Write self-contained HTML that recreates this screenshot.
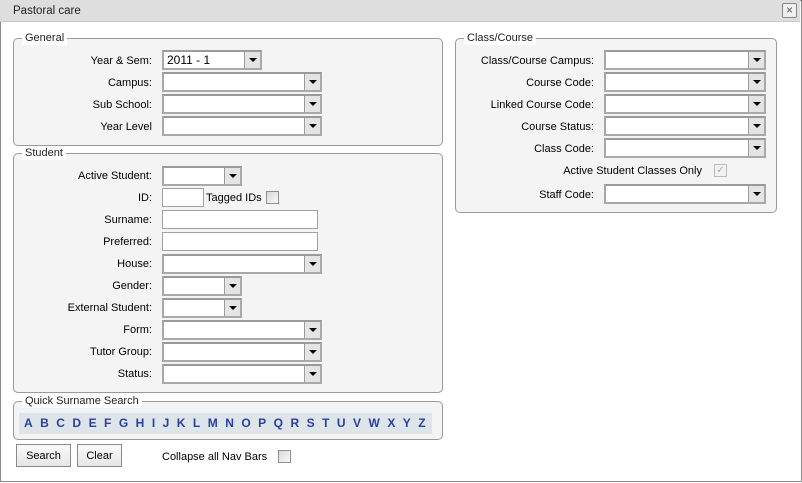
<!DOCTYPE html>
<html><head><meta charset="utf-8"><style>
*{box-sizing:border-box;margin:0;padding:0}
body{width:802px;height:483px;background:#fff;font-family:"Liberation Sans",sans-serif;font-size:11px;color:#000;position:relative;overflow:hidden}
.win{position:absolute;left:0;top:0;width:802px;height:482px;border:1px solid #8a8a8a;background:#fff}
.title{position:absolute;left:0;top:0;width:800px;height:22px;background:#dedede;border-bottom:1px solid #c8c8c8}
.title span{position:absolute;left:13px;top:5px;font-size:11.5px;color:#222}
.close{position:absolute;left:782px;top:3px;width:15px;height:15px;border:1px solid #888;border-radius:2px;background:#f0f0f0;font-size:12px;line-height:12px;text-align:center;color:#555}
.fs{position:absolute;border:1px solid #9a9a9a;border-radius:5px;background:#f4f4f4}
.lg{position:absolute;background:#fff;padding:0 3px;font-size:11px;color:#222;top:-8px;left:8px;line-height:14px}
.lb{position:absolute;text-align:right;white-space:nowrap;font-size:11px;line-height:14px;margin-top:1px}
.sel{position:absolute;height:20px;border:2px solid #a9a9a9;border-top-color:#9a9a9a;background:#fff;font-size:12px;line-height:16px;padding-left:3px}
.sel i{position:absolute;right:0;top:0;width:16px;height:16px;background:#e4e4e4;border-left:1px solid #999}
.sel i:after{content:"";position:absolute;left:4px;top:6px;border-left:4px solid transparent;border-right:4px solid transparent;border-top:4px solid #000}
.inp{position:absolute;height:19px;border:1px solid #a0a0a0;background:#fff}
.cb{position:absolute;width:13px;height:13px;border:1px solid #8f8f8f;background:linear-gradient(135deg,#d8d8d8,#fafafa)}
.letters{position:absolute;left:19px;top:413px;width:413px;height:21px;background:#dde5ea;font-weight:bold;color:#2b3f9e;font-size:12px;line-height:21px;padding:0 6px 0 5px;display:flex;justify-content:space-between}
.btn{position:absolute;height:23px;border:1px solid #8a8a8a;background:linear-gradient(#fafafa,#e6e6e6);font-size:11px;line-height:22px;text-align:center}
</style></head><body>
<div class="win"></div>
<div class="title"><span>Pastoral care</span></div>
<div class="close">×</div>

<div class="fs" style="left:13px;top:38px;width:430px;height:108px"><div class="lg">General</div></div>
<div class="fs" style="left:13px;top:153px;width:430px;height:240px"><div class="lg">Student</div></div>
<div class="fs" style="left:13px;top:401px;width:430px;height:39px"><div class="lg">Quick Surname Search</div></div>
<div class="fs" style="left:455px;top:38px;width:322px;height:175px"><div class="lg">Class/Course</div></div>

<div class="lb" style="right:650px;top:53px">Year &amp; Sem:</div><div class="sel" style="left:162px;top:50px;width:100px">2011 - 1<i></i></div>
<div class="lb" style="right:650px;top:75px">Campus:</div><div class="sel" style="left:162px;top:72px;width:160px"><i></i></div>
<div class="lb" style="right:650px;top:97px">Sub School:</div><div class="sel" style="left:162px;top:94px;width:160px"><i></i></div>
<div class="lb" style="right:650px;top:119px">Year Level</div><div class="sel" style="left:162px;top:116px;width:160px"><i></i></div>

<div class="lb" style="right:650px;top:168px">Active Student:</div><div class="sel" style="left:162px;top:166px;width:80px"><i></i></div>
<div class="lb" style="right:650px;top:190px">ID:</div><div class="inp" style="left:162px;top:188px;width:42px"></div>
<div class="lb" style="left:206px;top:190px">Tagged IDs</div><div class="cb" style="left:266px;top:191px"></div>
<div class="lb" style="right:650px;top:212px">Surname:</div><div class="inp" style="left:162px;top:210px;width:156px"></div>
<div class="lb" style="right:650px;top:234px">Preferred:</div><div class="inp" style="left:162px;top:232px;width:156px"></div>
<div class="lb" style="right:650px;top:256px">House:</div><div class="sel" style="left:162px;top:254px;width:160px"><i></i></div>
<div class="lb" style="right:650px;top:278px">Gender:</div><div class="sel" style="left:162px;top:276px;width:80px"><i></i></div>
<div class="lb" style="right:650px;top:300px">External Student:</div><div class="sel" style="left:162px;top:298px;width:80px"><i></i></div>
<div class="lb" style="right:650px;top:322px">Form:</div><div class="sel" style="left:162px;top:320px;width:160px"><i></i></div>
<div class="lb" style="right:650px;top:344px">Tutor Group:</div><div class="sel" style="left:162px;top:342px;width:160px"><i></i></div>
<div class="lb" style="right:650px;top:366px">Status:</div><div class="sel" style="left:162px;top:364px;width:160px"><i></i></div>

<div class="letters"><span>A</span><span>B</span><span>C</span><span>D</span><span>E</span><span>F</span><span>G</span><span>H</span><span>I</span><span>J</span><span>K</span><span>L</span><span>M</span><span>N</span><span>O</span><span>P</span><span>Q</span><span>R</span><span>S</span><span>T</span><span>U</span><span>V</span><span>W</span><span>X</span><span>Y</span><span>Z</span></div>

<div class="btn" style="left:16px;top:444px;width:55px">Search</div>
<div class="btn" style="left:77px;top:444px;width:45px">Clear</div>
<div class="lb" style="left:162px;top:449px">Collapse all Nav Bars</div><div class="cb" style="left:278px;top:450px"></div>

<div class="lb" style="right:208px;top:53px">Class/Course Campus:</div><div class="sel" style="left:604px;top:50px;width:162px"><i></i></div>
<div class="lb" style="right:208px;top:75px">Course Code:</div><div class="sel" style="left:604px;top:72px;width:162px"><i></i></div>
<div class="lb" style="right:208px;top:97px">Linked Course Code:</div><div class="sel" style="left:604px;top:94px;width:162px"><i></i></div>
<div class="lb" style="right:208px;top:119px">Course Status:</div><div class="sel" style="left:604px;top:116px;width:162px"><i></i></div>
<div class="lb" style="right:208px;top:141px">Class Code:</div><div class="sel" style="left:604px;top:138px;width:162px"><i></i></div>
<div class="lb" style="right:100px;top:163px">Active Student Classes Only</div><div class="cb" style="left:714px;top:164px;background:#f2f2f2;border-color:#bbb;color:#aaa;font-size:10px;line-height:11px;text-align:center">✓</div>
<div class="lb" style="right:208px;top:187px">Staff Code:</div><div class="sel" style="left:604px;top:184px;width:162px"><i></i></div>
</body></html>
